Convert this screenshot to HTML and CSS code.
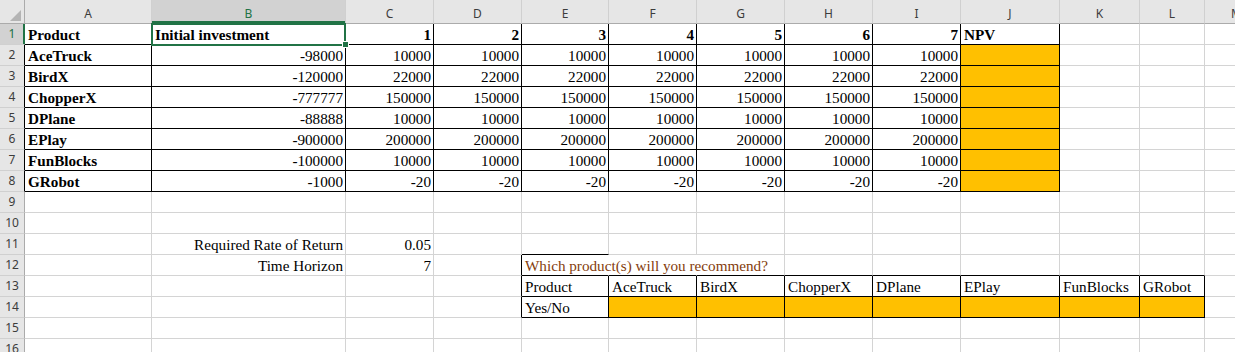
FILE: index.html
```html
<!DOCTYPE html>
<html lang="en">
<head>
  <meta charset="UTF-8">
  <title>NPV Sheet</title>
  <link rel="stylesheet" href="styles.css">
</head>
<body>

<div class="sheet" id="sheet"></div>

<script>
  const sheet = document.getElementById('sheet');
  const cols = 'ABCDEFGHIJKLM'.split('');
  const rowCount = 16;

  const products = [
    ['AceTruck', '-98000', '10000'],
    ['BirdX', '-120000', '22000'],
    ['ChopperX', '-777777', '150000'],
    ['DPlane', '-88888', '10000'],
    ['EPlay', '-900000', '200000'],
    ['FunBlocks', '-100000', '10000'],
    ['GRobot', '-1000', '-20']
  ];

  const values = {};
  const classes = {};

  function put(ref, value, cls) {
    if (value !== null) values[ref] = value;
    classes[ref] = (classes[ref] || '') + ' ' + cls;
  }

  // main table A1:J8
  const head = ['Product', 'Initial investment', '1', '2', '3', '4', '5', '6', '7', 'NPV'];
  head.forEach((text, c) => {
    let cls = 'br bb bold';
    if (c >= 2 && c <= 8) cls += ' num';
    put(cols[c] + 1, text, cls);
  });

  products.forEach((p, i) => {
    const r = i + 2;
    put('A' + r, p[0], 'br bb bold');
    put('B' + r, p[1], 'br bb num');
    for (let c = 2; c <= 8; c++) {
      put(cols[c] + r, p[2], 'br bb num');
    }
    put('J' + r, '', 'br bb fill');
  });

  // inputs
  put('B11', 'Required Rate of Return', 'num');
  put('C11', '0.05', 'num');
  put('B12', 'Time Horizon', 'num');
  put('C12', '7', 'num');

  // recommendation table
  put('E11', null, 'bb');
  put('E12', 'Which product(s) will you recommend?', 'bb nr brown');
  put('F12', null, 'bb nr');
  'GHIJKL'.split('').forEach(c => put(c + '12', null, 'bb'));
  put('D12', null, 'br');
  put('D13', null, 'br');
  put('D14', null, 'br');

  put('E13', 'Product', 'br bb');
  put('E14', 'Yes/No', 'br bb');
  products.forEach((p, i) => {
    const c = cols[5 + i];
    put(c + '13', p[0], 'br bb');
    put(c + '14', '', 'br bb fill');
  });

  function add(cls, html) {
    const div = document.createElement('div');
    div.className = cls;
    div.innerHTML = html;
    sheet.appendChild(div);
  }

  add('corner', '<svg width="11" height="11" viewBox="0 0 11 11"><polygon points="11,0 11,11 0,11" fill="#b4b4b4"/></svg>');
  cols.forEach(c => add('col-head' + (c === 'B' ? ' sel' : ''), c));

  for (let r = 1; r <= rowCount; r++) {
    let rh = 'row-head';
    if (r === 1) rh += ' sel';
    else if (r <= 8) rh += ' br';
    add(rh, r);

    cols.forEach(c => {
      const ref = c + r;
      let cls = 'cell' + (classes[ref] || '');
      if (ref === 'B1') cls += ' active';
      add(cls, values[ref] || '');
    });
  }
</script>

</body>
</html>
```

FILE: styles.css
```css
html, body {
  margin: 0;
  padding: 0;
  background-color: white;
  overflow: hidden;
}

.sheet {
  display: grid;
  grid-template-columns: 25px 127px 194px 88px 88px 87px 88px 88px 88px 88px 99px 80px 65px 64px;
  grid-template-rows: 24px repeat(16, 21px);
  width: 1269px;
}

.corner,
.col-head,
.row-head {
  box-sizing: border-box;
  background-color: #e6e6e6;
  font-family: 'Noto Sans', 'Open Sans', sans-serif;
  font-size: 12px;
  color: #3c3c3c;
}

.corner {
  display: flex;
  align-items: flex-end;
  justify-content: flex-end;
  padding: 0 3px 2px 0;
  border-right: 1px solid #ababab;
  border-bottom: 1px solid #ababab;
}

.corner svg {
  display: block;
}

.col-head {
  text-align: center;
  line-height: 16px;
  padding-top: 6px;
  border-right: 1px solid #d0d0d0;
  border-bottom: 1px solid #ababab;
}

.row-head {
  text-align: center;
  line-height: 20px;
  border-right: 1px solid #ababab;
  border-bottom: 1px solid #d0d0d0;
}

.row-head.br {
  border-right-color: black;
}

.col-head.sel {
  background-color: #d2d2d2;
  color: #217346;
  box-shadow: inset 0 -2px #217346;
}

.row-head.sel {
  background-color: #d2d2d2;
  color: #217346;
  border-right-color: #217346;
  box-shadow: inset -1px 0 #217346;
}

.cell {
  box-sizing: border-box;
  padding: 0 2px 0 3px;
  border-right: 1px solid #d4d4d4;
  border-bottom: 1px solid #d4d4d4;
  font-family: 'Liberation Serif', 'Times New Roman', serif;
  font-size: 15.2px;
  line-height: 21px;
  color: black;
  white-space: nowrap;
  overflow: visible;
}

.cell.br {
  border-right-color: black;
}

.cell.bb {
  border-bottom-color: black;
}

.cell.nr {
  border-right-color: transparent;
}

.num {
  text-align: right;
}

.bold {
  font-weight: bold;
}

.fill {
  background-color: #ffc000;
}

.brown {
  color: #843c0c;
}

.active {
  position: relative;
}

.active::after {
  content: '';
  position: absolute;
  left: -1px;
  top: -1px;
  right: -1px;
  bottom: -2px;
  border: 2px solid #217346;
}

.active::before {
  content: '';
  position: absolute;
  right: -4px;
  bottom: -4px;
  width: 5px;
  height: 5px;
  background-color: #217346;
  border: 1px solid white;
  z-index: 1;
}
```
